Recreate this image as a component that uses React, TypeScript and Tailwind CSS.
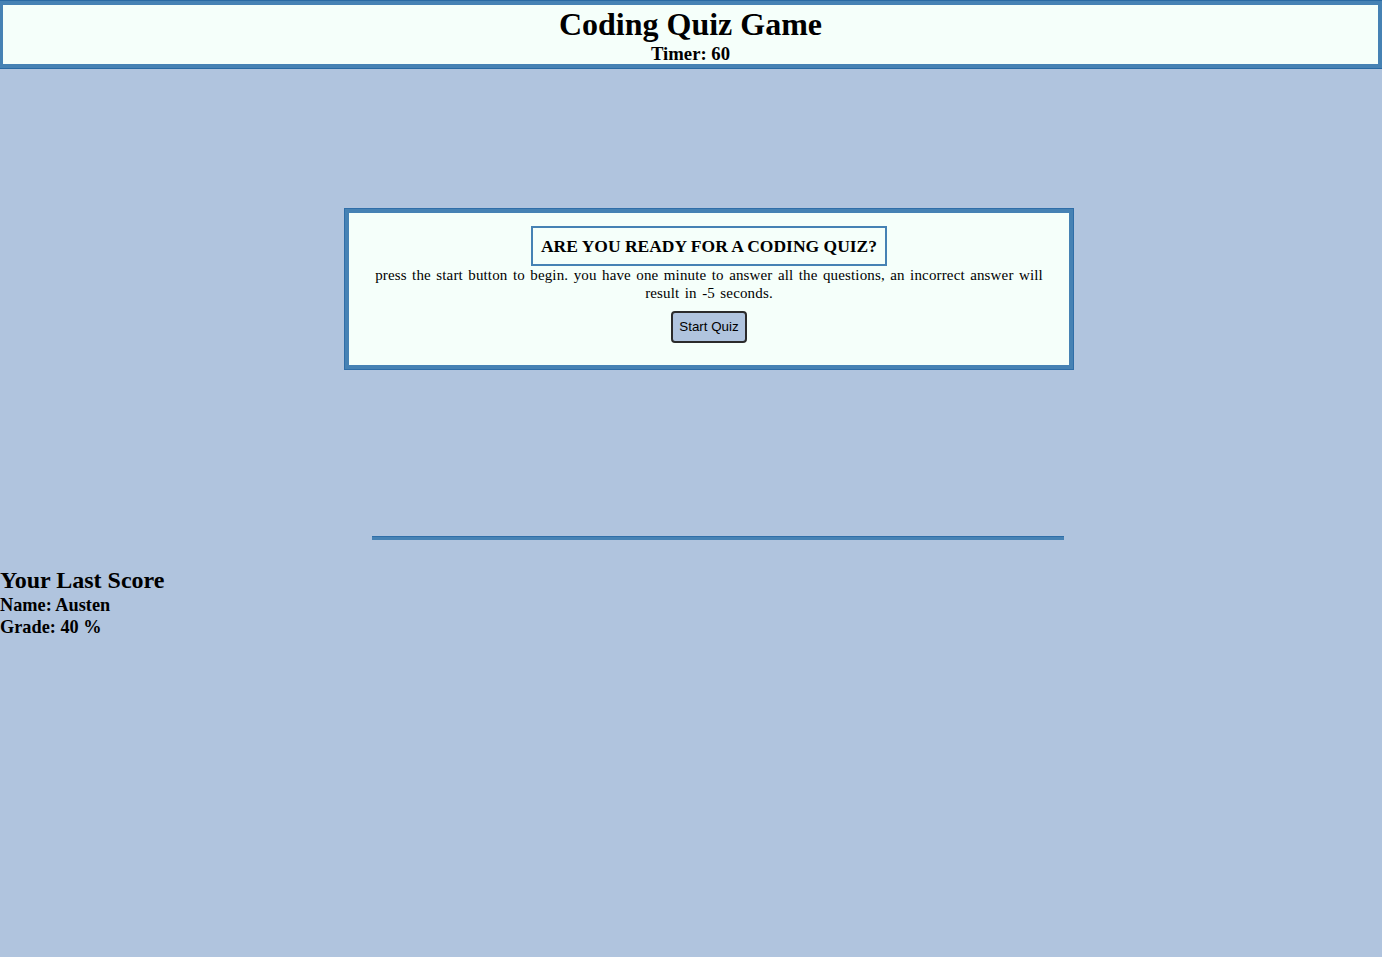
import React from "react";

export default function App() {
  return (
    <div
      className="min-h-[957px] w-full bg-[#B0C4DE] text-black"
      style={{ fontFamily: '"Liberation Serif", "Times New Roman", serif' }}
    >
      <div className="pt-[1px]">
        <header className="border-y-[4px] border-l-[3px] border-r-[4px] border-[#4682B4] bg-[#F5FFFA] text-center shadow-[0_-1px_0_#2a6aa3,0_1px_0_#2a6aa3]">
          <h1 className="m-0 pt-[1px] text-[32px] font-bold leading-[37px]">Coding Quiz Game</h1>
          <div className="text-[18.7px] font-bold leading-[21px]">Timer: 60</div>
        </header>
      </div>

      <div className="mt-[140px] ml-[344px] w-[730px] border-[1px] border-[#2f6ea8] bg-[#4682B4] p-[4px]">
        <div className="flex flex-col items-center bg-[#F5FFFA] px-[20px] pt-[13px] pb-[22px] text-center">
          <div className="border-2 border-[#4682B4] px-[8px] py-[8px] text-[17.5px] font-bold leading-[20px]">
            ARE YOU READY FOR A CODING QUIZ?
          </div>
          <p className="mt-0 text-[15px] leading-[18px] tracking-[0.15px] [word-spacing:1.5px]">
            press the start button to begin. you have one minute to answer all the questions, an incorrect answer will result in -5 seconds.
          </p>
          <button
            className="mt-[9px] h-[32px] w-[76px] rounded-[4px] border-2 border-[#2b2b2b] bg-[#B0C4DE] text-[13.33px] text-black"
            style={{ fontFamily: '"Liberation Sans", Arial, sans-serif' }}
          >
            Start Quiz
          </button>
        </div>
      </div>

      <div className="mt-[166px] ml-[372px] h-[4px] w-[692px] border-t border-[#2f6ea8] bg-[#4682B4]" />

      <div className="mt-[26px]">
        <h2 className="m-0 text-[24px] font-bold leading-[28px]">Your Last Score</h2>
        <div className="text-[18.3px] font-bold leading-[22px]">Name: Austen</div>
        <div className="text-[18.3px] font-bold leading-[22px]">Grade: 40 %</div>
      </div>
    </div>
  );
}
